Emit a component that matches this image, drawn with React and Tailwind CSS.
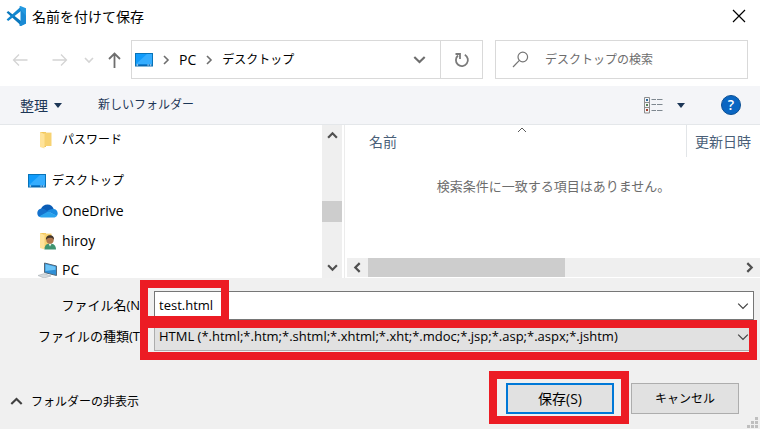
import { useState } from "react";

const filters = [
  "HTML (*.html;*.htm;*.shtml;*.xhtml;*.xht;*.mdoc;*.jsp;*.asp;*.aspx;*.jshtm)",
];

function VsCodeIcon() {
  return (
    <svg width="20" height="20" viewBox="0 0 20 20" aria-hidden="true">
      <path d="M0.6 6.4 2.2 5 15 15v4.5Z" fill="#0b78bd" />
      <path d="M0.6 13.4 2.2 14.9 15 5V.4Z" fill="#1287cf" />
      <path d="M14.5 0 20 2.3v15.2L14.5 20c-.5 0-.9-.3-1-.8l1.2-3V3.8L13.4.8c.2-.5.6-.8 1.1-.8Z" fill="#2499e0" />
      <path d="M14.7 3.8v12.4L13.4 19.2 15 20l5-2.5V10Z" fill="#1a8ad4" />
    </svg>
  );
}

function DesktopIcon() {
  return (
    <svg className="shrink-0" width="18" height="14" viewBox="0 0 18 14" aria-hidden="true">
      <rect x="0.5" y="0.5" width="17" height="12.5" fill="#109bfb" stroke="#0873b8" />
      <path d="M1 11 12 1h5v10Z" fill="#35adff" />
      <path d="M1 11.5h16V13H1Z" fill="#0a66b0" />
      <path d="M1.5 12h1.6M12.5 12h1.2M14.8 12h1.6" stroke="#fff" />
    </svg>
  );
}

function FolderIcon({ person }) {
  return (
    <svg className="shrink-0" width="18" height="18" viewBox="0 0 18 18" aria-hidden="true">
      <path d="M2 1h6v15H2Z" fill="#f0c65c" />
      <path d="M6 1.6h7.5V15H6Z" fill="#f7d272" />
      <path d="M2 1 6.5 3v14.5L2 16Z" fill="#ffe39a" />
      {person && (
        <>
          <path d="M6.5 17.5c0-4 2-6 5.5-6s6 2 6 6Z" fill="#3f9470" />
          <path d="m10.5 11.5 1.5 3 1.8-3Z" fill="#e9f3ee" />
          <circle cx="12" cy="8" r="3.7" fill="#b0774d" />
          <path d="M8 8c-.5-3 1.5-4.8 4-4.8S16.5 5 16 8c-1-2-2-2.3-4-2.3S9 6.5 8 8Z" fill="#433529" />
        </>
      )}
    </svg>
  );
}

function OneDriveIcon() {
  return (
    <svg className="shrink-0" width="21" height="14" viewBox="0 0 21 14" aria-hidden="true">
      <path d="M4 5C5 2 7.5.4 10.5.4c3 0 5.3 1.9 6.2 4.6L12 9Z" fill="#0b5cb5" />
      <path d="M4.5 4.5C1.8 4.7.3 6.8.3 9c0 1.6.7 3 2 3.9L12 8 7.5 5.2c-.9-.5-1.9-.8-3-.7Z" fill="#1472cd" />
      <path d="M16 5c2.8-.2 4.7 1.8 4.7 4.3 0 1.2-.4 2-1 2.8L10 7l3-1.4c1-.4 2-.6 3-.6Z" fill="#1a8be0" />
      <path d="m2 12.6 9-5.2 9 4.4c-.7 1.1-2 1.8-3.4 1.8H4.6c-1 0-1.9-.4-2.6-1Z" fill="#2aa4ee" />
    </svg>
  );
}

function PcIcon() {
  return (
    <svg className="shrink-0" width="21" height="18" viewBox="0 0 21 18" aria-hidden="true">
      <path d="m7.5 2 12 3v9.5l-12-3Z" fill="#2f8fd6" stroke="#53697a" />
      <path d="m8.5 3.3 10 2.5v3L8.5 10Z" fill="#6cc4f7" />
      <path d="m1 14.5 6-1.8 7 2.3-7 2Z" fill="#d5dadd" stroke="#a9b0b5" strokeWidth="0.6" />
    </svg>
  );
}

function Chevron({ dir = "down", size = 10, width = 2, className = "" }) {
  const paths = {
    down: "M1 3 5 7 9 3",
    up: "M1 7 5 3 9 7",
    left: "M7 1 3 5 7 9",
    right: "M3 1 7 5 3 9",
  };
  return (
    <svg
      className={"shrink-0 " + className}
      width={size}
      height={size}
      viewBox="0 0 10 10"
      fill="none"
      stroke="currentColor"
      strokeWidth={width}
      aria-hidden="true"
    >
      <path d={paths[dir]} />
    </svg>
  );
}

function Arrow({ d, className }) {
  return (
    <svg className={className} width="16" height="16" viewBox="0 0 16 16" fill="none" stroke="currentColor" strokeWidth="1.3" aria-hidden="true">
      <path d={d} />
    </svg>
  );
}

function Caret() {
  return (
    <svg width="8" height="5" viewBox="0 0 8 5" fill="#1c3656" aria-hidden="true">
      <path d="M0 0h8L4 5Z" />
    </svg>
  );
}

function TitleBar() {
  return (
    <header className="flex h-8 items-center pl-1.5 pr-3">
      <VsCodeIcon />
      <h1 className="ml-1.5 flex-1 text-[14px]">名前を付けて保存</h1>
      <button aria-label="閉じる" className="p-0.5">
        <svg width="14" height="14" viewBox="0 0 14 14" stroke="#000" strokeWidth="1.2" aria-hidden="true">
          <path d="m1 1 12 12M13 1 1 13" />
        </svg>
      </button>
    </header>
  );
}

function NavBar() {
  return (
    <nav className="flex items-center pb-[7px] pl-3 pr-3 pt-2">
      <button aria-label="戻る">
        <Arrow className="text-[#d4d4d4]" d="M15.5 8H1.5M7 2.5 1.5 8 7 13.5" />
      </button>
      <button aria-label="進む" className="ml-6">
        <Arrow className="text-[#d4d4d4]" d="M.5 8h14M9 2.5 14.5 8 9 13.5" />
      </button>
      <button aria-label="履歴" className="ml-4">
        <Chevron className="text-[#d4d4d4]" width={1.6} />
      </button>
      <button aria-label="上へ" className="ml-3.5">
        <svg width="13" height="18" viewBox="0 0 13 18" fill="none" stroke="#6e6e6e" strokeWidth="1.8" aria-hidden="true">
          <path d="M6.5 17V2.5M1 8l5.5-5.5L12 8" />
        </svg>
      </button>
      <div className="ml-2.5 flex h-[39px] flex-1 border border-[#d9d9d9]">
        <div className="flex flex-1 items-center pl-[3px] pr-3.5">
          <DesktopIcon />
          <Chevron dir="right" className="ml-2 text-[#6e6e6e]" width={1.6} />
          <a href="#pc" className="ml-2 text-[14px]">PC</a>
          <Chevron dir="right" className="ml-2 text-[#6e6e6e]" width={1.6} />
          <a href="#desktop" className="ml-2 flex-1 whitespace-nowrap text-[12px]">デスクトップ</a>
          <button aria-label="以前の場所">
            <Chevron size={13} className="text-[#6e6e6e]" width={1.6} />
          </button>
        </div>
        <button aria-label="更新" className="flex w-[42px] items-center justify-center border-l border-[#d9d9d9]">
          <svg width="16" height="16" viewBox="0 0 16 16" fill="none" stroke="#7a7a7a" strokeWidth="1.8" aria-hidden="true">
            <path d="M10.8 2.8A6 6 0 1 1 4 3.5" />
            <path d="M1.5 2H6v5" />
          </svg>
        </button>
      </div>
      <label className="ml-3 flex h-[39px] w-[253px] shrink-0 items-center border border-[#d9d9d9] pl-4">
        <svg className="shrink-0" width="17" height="17" viewBox="0 0 17 17" fill="none" stroke="#757575" strokeWidth="1.2" aria-hidden="true">
          <circle cx="10.8" cy="6" r="4.8" />
          <path d="M7.4 9.4 1 16" />
        </svg>
        <input
          type="text"
          aria-label="検索"
          placeholder="デスクトップの検索"
          className="ml-4 w-full min-w-0 text-[12px] outline-none placeholder:text-[#6d6d6d]"
        />
      </label>
    </nav>
  );
}

function Toolbar() {
  return (
    <div className="flex h-[39px] items-center border-b border-[#e4e7ea] bg-[#f4f5f8] pl-5 pr-[19px] text-[#1c3656]">
      <button className="flex items-center gap-1.5 text-[14px]">
        整理
        <Caret />
      </button>
      <button className="ml-9 text-[12px]">新しいフォルダー</button>
      <button aria-label="表示" className="ml-auto flex items-center gap-3.5">
        <svg width="19" height="17" viewBox="0 0 19 17" fill="none" aria-hidden="true">
          <path d="M.5.5h5v15.5h-5ZM.5 5.5h5M.5 10.5h5" stroke="#8d8d8d" />
          <path d="M2 3h2" stroke="#2c6a9c" strokeWidth="2" />
          <path d="M2 8h2" stroke="#5b8358" strokeWidth="2" />
          <path d="M2 13h2" stroke="#a3402f" strokeWidth="2" />
          <path d="M7.5 2.5H12M13 2.5h5.5M7.5 7.5H12M13 7.5h5.5M7.5 13.5H12M13 13.5h5.5" stroke="#7f8890" />
        </svg>
        <Caret />
      </button>
      <button
        aria-label="ヘルプ"
        className="ml-9 flex size-5 items-center justify-center rounded-full border border-[#0b4f94] bg-[#0a66c2] text-[14px] font-semibold leading-none text-white"
      >
        ?
      </button>
    </div>
  );
}

function FolderTree() {
  return (
    <aside className="flex w-[345px] shrink-0 border-r border-[#ececec]">
      <ul className="flex-1 overflow-hidden leading-none">
        <li className="mb-[11px] flex h-[30px] items-center gap-1.5 pl-[38px] text-[12px]">
          <FolderIcon />
          パスワード
        </li>
        <li className="flex h-[30px] items-center gap-1.5 pl-7 text-[12px]">
          <DesktopIcon />
          デスクトップ
        </li>
        <li className="flex h-[30px] items-center gap-1 pl-[37px] text-[14px]">
          <OneDriveIcon />
          OneDrive
        </li>
        <li className="flex h-[30px] items-center gap-1.5 pl-[38px] text-[14px]">
          <FolderIcon person />
          hiroy
        </li>
        <li className="flex h-7 items-center gap-1 pl-[37px] text-[14px]">
          <PcIcon />
          PC
        </li>
      </ul>
      <div className="mr-0.5 flex w-5 flex-col items-center bg-[#efefef] py-[5px] text-[#505050]">
        <Chevron dir="up" size={11} width={2} />
        <div className="mt-[60px] h-[21px] w-full bg-[#cdcdcd]" />
        <Chevron className="mt-auto" size={11} width={2} />
      </div>
    </aside>
  );
}

function FileList() {
  return (
    <section className="flex min-w-0 flex-1 flex-col pl-0.5">
      <div className="flex h-8 text-[14px] text-[#4a5f78]">
        <div className="relative flex flex-1 items-center border-r border-[#e2e5e8] pl-[22px]">
          名前
          <Chevron dir="up" className="absolute left-1/2 top-0 text-[#5a5a5a]" width={1} />
        </div>
        <div className="flex w-[73px] items-center whitespace-nowrap pl-2">更新日時</div>
      </div>
      <p className="mt-5 flex-1 text-center text-[13px] text-[#6d6d6d]">
        検索条件に一致する項目はありません。
      </p>
      <div className="mb-px flex h-[19px] items-center bg-[#efefef] px-[5px] text-[#505050]">
        <Chevron dir="left" size={11} width={2} />
        <div className="mx-[5px] h-full flex-1">
          <div className="h-full w-[53%] bg-[#cdcdcd]" />
        </div>
        <Chevron dir="right" size={11} width={2} />
      </div>
    </section>
  );
}

// red marker box laid over the control it points at
function Marker({ className }) {
  return (
    <span className={"pointer-events-none absolute z-10 border-8 border-[#ec1c24] " + className} />
  );
}

function SaveForm() {
  const [name, setName] = useState("test.html");

  return (
    <form onSubmit={(e) => e.preventDefault()} className="relative bg-[#f0f0f0] pb-[15px] pt-[13px]">
      <div className="flex pr-1.5">
        <label htmlFor="name" className="flex w-[154px] items-center justify-end whitespace-nowrap pr-3.5 text-[13px]">
          ファイル名(N
        </label>
        <div className="relative flex h-[29px] flex-1 items-center border border-[#767676] bg-white pr-1">
          <input
            id="name"
            type="text"
            value={name}
            onChange={(e) => setName(e.target.value)}
            className="min-w-0 flex-1 pl-1 text-[13px] outline-none"
          />
          <button type="button" aria-label="候補">
            <Chevron size={12} width={1} className="text-[#404040]" />
          </button>
          <Marker className="-left-[15px] -top-3 h-11 w-[89px]" />
        </div>
      </div>

      <div className="mt-[3px] flex pr-1.5">
        <label htmlFor="type" className="flex w-[154px] items-center justify-end whitespace-nowrap pr-3.5 text-[13px]">
          ファイルの種類(T
        </label>
        <div className="relative flex h-7 flex-1 items-center border border-[#adadad] bg-[#e1e1e1]">
          <select id="type" className="h-full min-w-0 flex-1 appearance-none pl-1 pr-6 text-[13px] outline-none">
            {filters.map((f) => (
              <option key={f}>{f}</option>
            ))}
          </select>
          <Chevron size={12} width={1} className="pointer-events-none absolute right-1 text-[#404040]" />
          <Marker className="-bottom-2.5 -left-[15px] -right-1 -top-1" />
        </div>
      </div>

      <div className="mt-8 flex items-center pl-2.5 pr-[21px]">
        <button type="button" className="mr-auto mt-1.5 flex items-center gap-2 text-[12px]">
          <Chevron dir="up" size={13} width={1.6} className="text-[#404040]" />
          フォルダーの非表示
        </button>
        <div className="relative">
          <button className="h-[31px] w-[108px] border-2 border-[#0078d7] bg-[#e1e1e1] text-[14px]">
            保存(S)
          </button>
          <Marker className="-bottom-2.5 -left-[17px] -right-[15px] -top-3" />
        </div>
        <button type="button" className="ml-[17px] h-[31px] w-[108px] border border-[#adadad] bg-[#e1e1e1] text-[12px]">
          キャンセル
        </button>
      </div>

      <svg className="absolute bottom-0 right-0.5" width="12" height="12" viewBox="0 0 12 12" fill="#bfbfbf" aria-hidden="true">
        <path d="M9 0h3v3H9ZM9 4h3v3H9ZM5 4h3v3H5ZM9 8h3v3H9ZM5 8h3v3H5ZM1 8h3v3H1Z" />
      </svg>
    </form>
  );
}

export default function App() {
  return (
    <div className="flex h-screen flex-col overflow-hidden bg-white font-['Open_Sans','Noto_Sans_CJK_JP',sans-serif] text-black">
      <TitleBar />
      <NavBar />
      <Toolbar />
      <main className="flex min-h-0 flex-1">
        <FolderTree />
        <FileList />
      </main>
      <SaveForm />
    </div>
  );
}
